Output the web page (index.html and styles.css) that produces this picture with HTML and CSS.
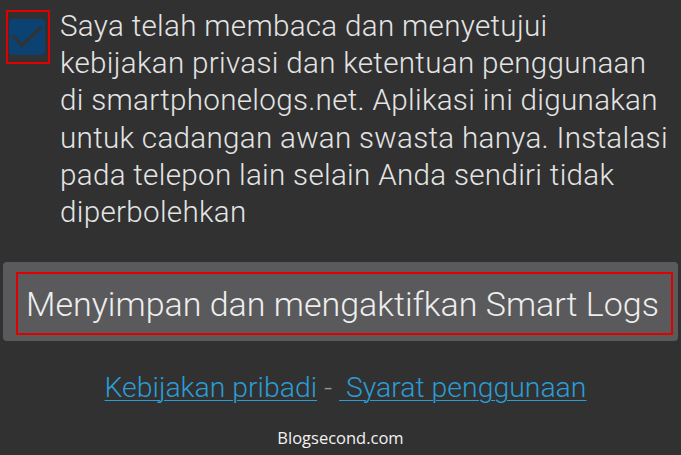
FILE: index.html
```html
<!DOCTYPE html>
<html lang="id">
<head>
<meta charset="utf-8">
<title>Smart Logs</title>
<link rel="stylesheet" href="styles.css">
</head>
<body>
<main class="page">
  <section class="consent">
    <label class="check-frame">
      <span class="check-box">
        <svg class="check-icon" viewBox="0 0 36 36" width="36" height="36" aria-hidden="true">
          <path d="M5 18 L13 26.5 L31 9" fill="none" stroke="#333333" stroke-width="3.2" stroke-linecap="square"/>
        </svg>
      </span>
    </label>
    <p class="consent-text">Saya telah membaca dan menyetujui<br>kebijakan privasi dan ketentuan penggunaan<br>di smartphonelogs.net. Aplikasi ini digunakan<br>untuk cadangan awan swasta hanya. Instalasi<br>pada telepon lain selain Anda sendiri tidak<br>diperbolehkan</p>
  </section>
  <section class="action">
    <button class="action-btn" type="button">Menyimpan dan mengaktifkan Smart Logs</button>
  </section>
  <nav class="links">
    <a class="link" href="#">Kebijakan pribadi</a><span class="sep"> - </span><a class="link" href="#"> Syarat penggunaan</a>
  </nav>
  <footer class="brand">Blogsecond.com</footer>
</main>
</body>
</html>
```
FILE: styles.css
```css
html, body {
  margin: 0;
  padding: 0;
  background: #313131;
}
body {
  width: 681px;
  height: 455px;
  overflow: hidden;
  font-family: "Roboto", "DejaVu Sans", sans-serif;
  font-weight: 300;
  color: #e4e4e4;
}
.page {
  display: flex;
  flex-direction: column;
}
.consent {
  display: flex;
  align-items: flex-start;
  gap: 10px;
  padding: 10px 0 0 6px;
}
.check-frame {
  display: block;
  flex: none;
  width: 40px;
  height: 50px;
  border: 2px solid #e00000;
  padding: 0;
  box-sizing: content-box;
}
.check-box {
  display: block;
  width: 36px;
  height: 36px;
  margin: 7px 0 0 1px;
  background: #0b4272;
  border-radius: 4px;
}
.check-icon {
  display: block;
}
.consent-text {
  margin: -2px 0 0 0;
  font-size: 29.6px;
  line-height: 37.2px;
  white-space: nowrap;
  letter-spacing: 0.3px;
}
.action {
  margin: 31px 3px 0 3px;
  padding: 10px 5px 6px 13px;
  background: #5a5a5c;
  border-radius: 4px;
}
.action-btn {
  display: block;
  width: 100%;
  height: 63px;
  margin: 0;
  padding: 0 0 0 8px;
  border: 2px solid #e00000;
  background: transparent;
  color: #eeeeee;
  font-family: inherit;
  font-weight: 300;
  font-size: 34px;
  text-align: left;
  white-space: nowrap;
  box-sizing: border-box;
}
.links {
  margin-top: 30px;
  display: flex;
  justify-content: center;
  padding-left: 10px;
  font-size: 28.4px;
  white-space: pre;
}
.link {
  color: #2b9cd6;
  text-decoration: underline;
  text-decoration-thickness: 1px;
  text-underline-offset: 3px;
}
.sep {
  color: #9a9a9a;
}
.brand {
  margin-top: 22px;
  text-align: center;
  font-family: "Open Sans", "Liberation Sans", sans-serif;
  font-weight: 400;
  font-size: 16.5px;
  color: #f2f2f2;
}
```
